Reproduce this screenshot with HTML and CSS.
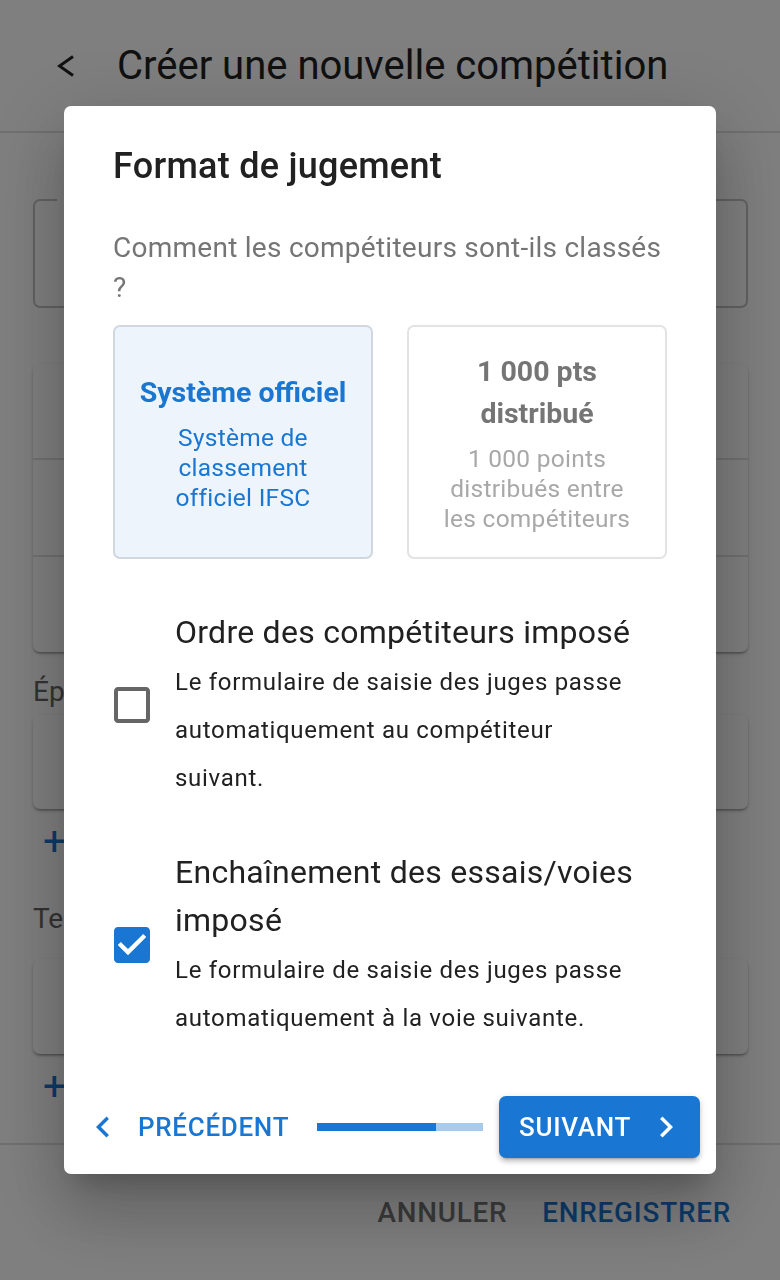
FILE: index.html
```html
<!DOCTYPE html>
<html lang="fr">
<head>
    <meta charset="UTF-8">
    <meta name="viewport" content="width=device-width, initial-scale=1.0">
    <title>Créer une nouvelle compétition</title>
    <link rel="stylesheet" href="styles.css">
</head>
<body>
    <div class="page">
        <header class="topbar">
            <svg class="back" viewBox="0 0 18 22"><polyline points="16,1.5 2.5,11 16,20.5" /></svg>
            <h1>Créer une nouvelle compétition</h1>
        </header>

        <main class="form">
            <div class="field">
                <span class="field-label">Nom</span>
                <span class="field-value">Co</span>
            </div>

            <div class="card">
                <div class="card-row"></div>
                <div class="card-row"></div>
                <div class="card-row"></div>
            </div>

            <h2 class="section">Épreuves</h2>
            <div class="card small"></div>
            <div class="add">+</div>

            <h2 class="section">Tentatives</h2>
            <div class="card small last"></div>
            <div class="add">+</div>
        </main>

        <footer class="bottombar">
            <button class="cancel">Annuler</button>
            <button class="save">Enregistrer</button>
        </footer>
    </div>

    <div class="overlay">
        <div class="dialog">
            <div class="dialog-body">
                <h2 class="dialog-title">Format de jugement</h2>
                <p class="question">Comment les compétiteurs sont-ils classés ?</p>

                <div class="options">
                    <div class="option selected">
                        <div class="opt-title">Système officiel</div>
                        <div class="opt-desc">Système de classement officiel IFSC</div>
                    </div>
                    <div class="option">
                        <div class="opt-title">1 000 pts distribué</div>
                        <div class="opt-desc">1 000 points distribués entre les compétiteurs</div>
                    </div>
                </div>

                <div class="check-row first">
                    <svg class="box" viewBox="0 0 24 24"><path fill="#666" d="M19 5v14H5V5h14m0-2H5c-1.1 0-2 .9-2 2v14c0 1.1.9 2 2 2h14c1.1 0 2-.9 2-2V5c0-1.1-.9-2-2-2z"/></svg>
                    <div class="check-text">
                        <div class="check-title">Ordre des compétiteurs imposé</div>
                        <div class="check-desc">Le formulaire de saisie des juges passe automatiquement au compétiteur suivant.</div>
                    </div>
                </div>

                <div class="check-row">
                    <svg class="box" viewBox="0 0 24 24"><path fill="#1976D2" d="M19 3H5c-1.11 0-2 .9-2 2v14c0 1.1.89 2 2 2h14c1.11 0 2-.9 2-2V5c0-1.1-.89-2-2-2zm-9 14l-5-5 1.41-1.41L10 14.17l7.59-7.59L19 8l-9 9z"/><path fill="#fff" d="M10 17l-5-5 1.41-1.41L10 14.170l7.59-7.59L19 8z"/></svg>
                    <div class="check-text">
                        <div class="check-title">Enchaînement des essais/voies imposé</div>
                        <div class="check-desc">Le formulaire de saisie des juges passe automatiquement à la voie suivante.</div>
                    </div>
                </div>
            </div>

            <div class="stepper">
                <button class="prev">
                    <svg viewBox="0 0 24 24"><path d="M15.41 16.59L10.83 12l4.58-4.59L14 6l-6 6 6 6 1.41-1.41z"/></svg>
                    Précédent
                </button>
                <div class="progress"><div class="progress-bar" style="width: 71.43%"></div></div>
                <button class="next">
                    Suivant
                    <svg viewBox="0 0 24 24"><path d="M8.59 16.59L13.17 12 8.59 7.41 10 6l6 6-6 6-1.41-1.41z"/></svg>
                </button>
            </div>
        </div>
    </div>
</body>
</html>
```

FILE: styles.css
```css
* { margin: 0; padding: 0; box-sizing: border-box; }
body {
    background-color: #fff;
    font-family: Roboto, "Liberation Sans", sans-serif;
    color: #212121;
}
button { font-family: inherit; border: 0; background: none; }

/* page behind the dialog */
div.page {
    display: flex;
    flex-direction: column;
    height: 100vh;
}
header.topbar {
    display: flex;
    align-items: center;
    height: 133px;
    padding-left: 57px;
    border-bottom: 2px solid #e0e0e0;
}
svg.back {
    width: 18px; height: 22px;
    fill: none;
    stroke: #222;
    stroke-width: 3;
}
header.topbar h1 {
    margin-left: 42px;
    font-size: 40px;
    font-weight: 400;
    line-height: 48px;
    color: #212121;
}
main.form {
    flex: 1;
    padding: 0 32px 0 33px;
}
div.field {
    position: relative;
    display: flex;
    align-items: center;
    margin-top: 66px;
    height: 109px;
    padding-left: 29px;
    border: 2px solid #c4c4c4;
    border-radius: 7px;
}
span.field-label {
    position: absolute;
    top: -13px; left: 22px;
    padding: 0 7px;
    background: #fff;
    font-size: 21px;
    color: #666;
}
span.field-value { font-size: 28px; color: #212121; }
div.card {
    margin-top: 56px;
    background: #fff;
    border-radius: 7px;
    box-shadow: 0 3px 2px -2px rgba(0,0,0,.2), 0 2px 2px 0 rgba(0,0,0,.14), 0 2px 5px 0 rgba(0,0,0,.12);
}
div.card-row { height: 94px; }
div.card-row + div.card-row { height: 97px; border-top: 2px solid #e0e0e0; }
div.card.small { margin-top: 2px; height: 94px; }
div.card.small.last { margin-top: 19px; height: 95px; }
h2.section {
    margin-top: 19px;
    font-size: 28px;
    font-weight: 400;
    line-height: 42px;
    color: #666;
}
div.add {
    display: flex;
    align-items: center;
    height: 64px;
    padding-left: 10px;
    font-size: 40px;
    color: #1976D2;
}
div.add + h2.section { margin-top: 25px; }
footer.bottombar {
    display: flex;
    justify-content: flex-end;
    align-items: center;
    gap: 35px;
    height: 137px;
    padding-right: 49px;
    border-top: 2px solid #e0e0e0;
}
footer.bottombar button {
    font-size: 27.8px;
    font-weight: 500;
    letter-spacing: .8px;
    text-transform: uppercase;
}
button.cancel { color: #757575; }
button.save { color: #1976D2; }

/* dialog */
div.overlay {
    position: fixed;
    top: 0; left: 0; right: 0; bottom: 0;
    display: flex;
    justify-content: center;
    align-items: center;
    background-color: rgba(0,0,0,.5);
}
div.dialog {
    width: 652px;
    padding: 32px 0 16px;
    background-color: #fff;
    border-radius: 7px;
    box-shadow: 0 19px 26px -12px rgba(0,0,0,.2), 0 42px 66px 5px rgba(0,0,0,.14), 0 16px 80px 14px rgba(0,0,0,.12);
}
div.dialog-body { padding: 0 49px; }
h2.dialog-title {
    font-size: 36px;
    font-weight: 500;
    line-height: 56px;
    letter-spacing: .26px;
    color: #212121;
}
p.question {
    margin-top: 34px;
    font-size: 28px;
    line-height: 40px;
    letter-spacing: .26px;
    color: #757575;
}
div.options {
    display: grid;
    grid-template-columns: 1fr 1fr;
    gap: 34px;
    margin-top: 17px;
    height: 234px;
}
div.option {
    display: flex;
    flex-direction: column;
    justify-content: center;
    align-items: center;
    padding: 0 23px;
    border: 2px solid #e3e3e3;
    border-radius: 7px;
    text-align: center;
}
div.option.selected {
    background-color: #EDF4FB;
    border-color: #d0d7df;
}
div.opt-title {
    font-size: 28.5px;
    font-weight: 700;
    line-height: 42px;
    color: #757575;
}
div.opt-desc {
    margin-top: 9px;
    font-size: 24.5px;
    line-height: 30px;
    letter-spacing: .26px;
    color: #a8a8a8;
}
div.selected div.opt-title,
div.selected div.opt-desc { color: #1976D2; }

div.check-row {
    display: flex;
    align-items: center;
    margin-top: 46px;
}
div.check-row.first { margin-top: 49px; }
svg.box {
    flex: none;
    width: 48px; height: 48px;
    margin: 0 19px 0 -5px;
}
div.check-text { flex: 1; padding-right: 28px; }
div.check-title {
    font-size: 32px;
    line-height: 48px;
    letter-spacing: .26px;
    color: #212121;
}
div.check-desc {
    margin-top: 2px;
    font-size: 24px;
    line-height: 48px;
    letter-spacing: .7px;
    color: #212121;
}

div.stepper {
    display: flex;
    align-items: center;
    margin-top: 54px;
    padding: 0 16px 0 18px;
}
div.stepper button {
    display: flex;
    align-items: center;
    font-size: 26px;
    font-weight: 500;
    letter-spacing: .7px;
    text-transform: uppercase;
}
div.stepper svg { width: 42px; height: 42px; fill: currentColor; }
button.prev { color: #1976D2; }
button.prev svg { margin-right: 14px; }
div.progress {
    flex: 1;
    height: 8px;
    margin: 0 16px 0 28px;
    background-color: #a7caed;
}
div.progress-bar { height: 100%; background-color: #1976D2; }
button.next {
    height: 62px;
    padding: 0 13px 0 20px;
    background-color: #1976D2;
    color: #fff;
    border-radius: 7px;
    box-shadow: 0 5px 2px -4px rgba(0,0,0,.2), 0 4px 4px 0 rgba(0,0,0,.14), 0 2px 9px 0 rgba(0,0,0,.12);
}
button.next svg { margin-left: 14px; }
```
